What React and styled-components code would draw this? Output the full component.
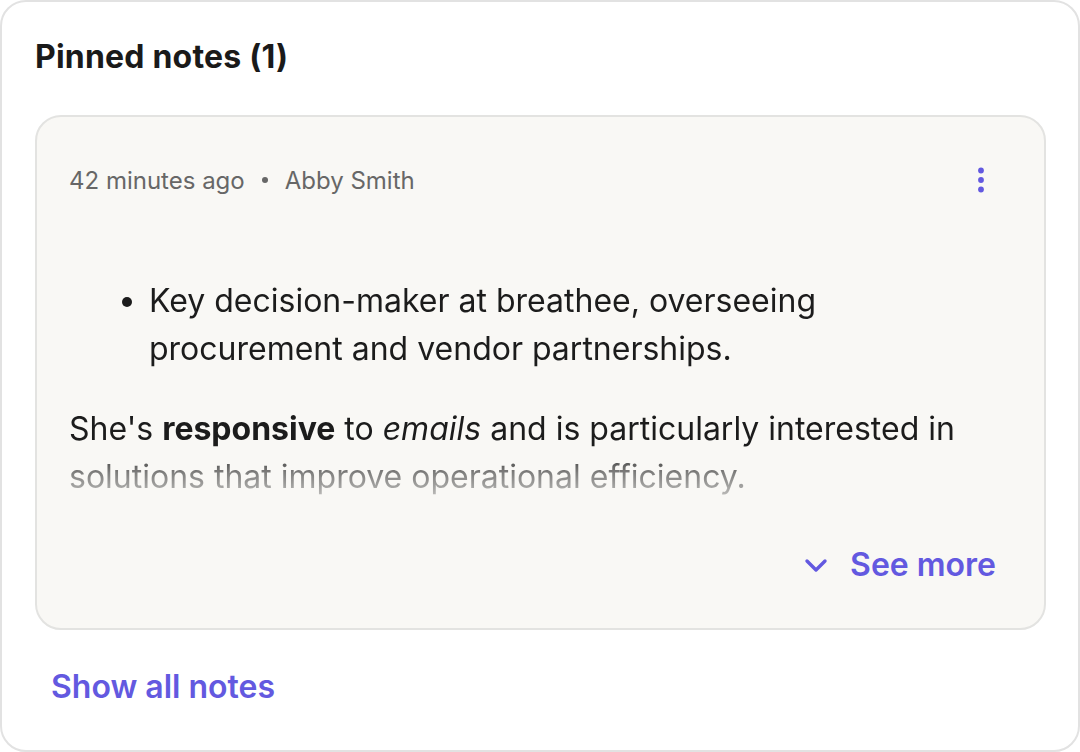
import React from "react";
import styled, { createGlobalStyle } from "styled-components";

const GlobalStyle = createGlobalStyle`
  html, body {
    margin: 0;
    padding: 0;
    background: #ffffff;
  }
  body {
    font-family: Inter, "Noto Sans", sans-serif;
    -webkit-font-smoothing: antialiased;
  }
`;

const Panel = styled.section`
  box-sizing: border-box;
  width: 1080px;
  height: 752px;
  border: 2px solid #e2e2e2;
  border-radius: 26px;
  background: #fff;
  padding: 35px 33px 0 33px;
  display: flex;
  flex-direction: column;
`;

const Title = styled.h2`
  margin: 0 0 38px 0;
  font-size: 32px;
  line-height: 40px;
  font-weight: 700;
  color: #1a1a1a;
  letter-spacing: 0.2px;
`;

const NoteCard = styled.article`
  box-sizing: border-box;
  width: 1011px;
  border: 2px solid #e3e3e1;
  border-radius: 26px;
  background: #f9f8f5;
  padding: 31px 32px 39px 32px;
  display: flex;
  flex-direction: column;
`;

const MetaRow = styled.div`
  display: flex;
  align-items: center;
  justify-content: space-between;
  height: 64px;
`;

const Meta = styled.div`
  display: flex;
  align-items: center;
  gap: 17px;
  font-size: 24px;
  color: #676767;
`;

const Dot = styled.span`
  width: 6px;
  height: 6px;
  border-radius: 50%;
  background: #676767;
`;

const IconButton = styled.button`
  width: 64px;
  height: 64px;
  margin-right: -1px;
  border: none;
  background: transparent;
  display: flex;
  align-items: center;
  justify-content: center;
  color: #6359e0;
  cursor: pointer;
  padding: 0;
`;

const Body = styled.div`
  margin-top: 65px;
  font-size: 32px;
  line-height: 48px;
  color: #1c1c1c;
  max-height: 224px;
  overflow: hidden;
  -webkit-mask-image: linear-gradient(to bottom, #000 0, #000 170px, rgba(0,0,0,0.55) 196px, rgba(0,0,0,0.22) 224px);
  mask-image: linear-gradient(to bottom, #000 0, #000 170px, rgba(0,0,0,0.55) 196px, rgba(0,0,0,0.22) 224px);
`;

const List = styled.ul`
  margin: 0;
  padding: 0 80px 0 80px;
  list-style: disc;
`;

const Para = styled.p`
  margin: 32px 0 0 0;
`;

const Actions = styled.div`
  display: flex;
  justify-content: flex-end;
  margin-top: 40px;
`;

const LinkButton = styled.button`
  border: none;
  background: transparent;
  font-family: inherit;
  font-size: 32px;
  line-height: 48px;
  font-weight: 600;
  color: #6359e0;
  display: flex;
  align-items: center;
  gap: 22px;
  padding: 0 16px;
  cursor: pointer;
`;

const Footer = styled.div`
  margin-top: 33px;
`;

const Kebab = () => (
  <svg width="8" height="28" viewBox="0 0 8 28" fill="currentColor">
    <circle cx="4" cy="4.5" r="2.9" />
    <circle cx="4" cy="14" r="2.9" />
    <circle cx="4" cy="23.5" r="2.9" />
  </svg>
);

const Chevron = () => (
  <svg width="24" height="24" viewBox="0 0 24 24" fill="none" stroke="currentColor" strokeWidth="3.4" strokeLinecap="round" strokeLinejoin="round">
    <path d="M3 8l9 9 9-9" />
  </svg>
);

export default function App() {
  return (
    <>
      <GlobalStyle />
      <Panel>
        <Title>Pinned notes (1)</Title>
        <NoteCard>
          <MetaRow>
            <Meta>
              <span>42 minutes ago</span>
              <Dot />
              <span>Abby Smith</span>
            </Meta>
            <IconButton aria-label="More options">
              <Kebab />
            </IconButton>
          </MetaRow>
          <Body>
            <List>
              <li>Key decision-maker at breathee, overseeing procurement and vendor partnerships.</li>
            </List>
            <Para>
              She's <strong>responsive</strong> to <em>emails</em> and is particularly interested in solutions that improve operational efficiency.
            </Para>
          </Body>
          <Actions>
            <LinkButton>
              <Chevron />
              See more
            </LinkButton>
          </Actions>
        </NoteCard>
        <Footer>
          <LinkButton>Show all notes</LinkButton>
        </Footer>
      </Panel>
    </>
  );
}
